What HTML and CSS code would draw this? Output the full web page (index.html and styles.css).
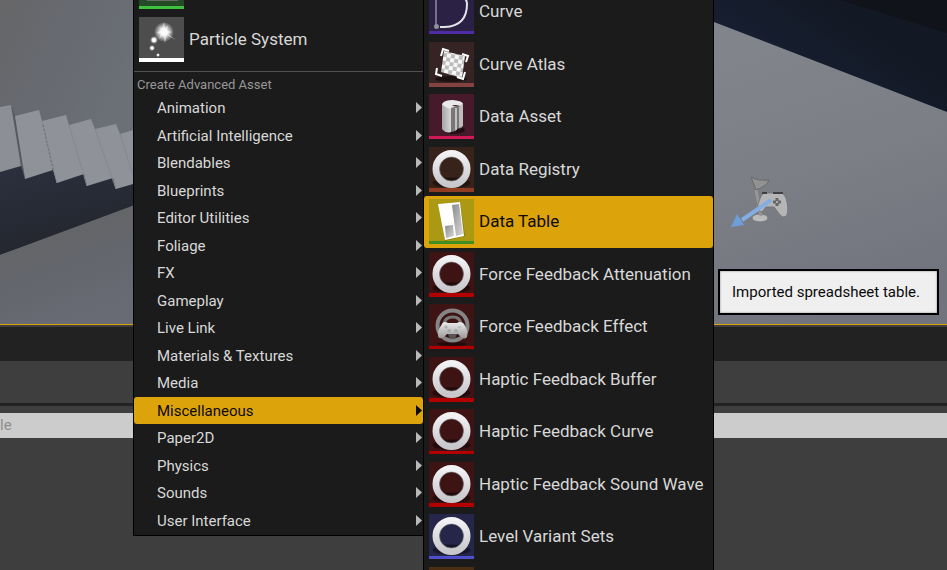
FILE: index.html
```html
<!DOCTYPE html>
<html lang="en">
<head>
<meta charset="utf-8">
<title>Content Browser</title>
<link rel="stylesheet" href="styles.css">
</head>
<body>
<svg class="defs" width="0" height="0" aria-hidden="true">
  <defs>
    <linearGradient id="metal" x1="0" y1="0" x2="0" y2="1">
      <stop offset="0" stop-color="#f2f2f4"/><stop offset="1" stop-color="#c8c8cc"/>
    </linearGradient>
    <linearGradient id="pad" x1="0" y1="0" x2="0" y2="1">
      <stop offset="0" stop-color="#ececec"/><stop offset="1" stop-color="#999"/>
    </linearGradient>
    <linearGradient id="grey" x1="0" y1="0" x2="1" y2="1">
      <stop offset="0" stop-color="#8b8b8b"/><stop offset="1" stop-color="#d8d8d8"/>
    </linearGradient>
    <linearGradient id="pillar" x1="0" y1="0" x2="1" y2="0">
      <stop offset="0" stop-color="#a5a5a5"/><stop offset="0.5" stop-color="#dedede"/><stop offset="1" stop-color="#8d8d8d"/>
    </linearGradient>
    <radialGradient id="glow">
      <stop offset="0" stop-color="#fff"/><stop offset="0.35" stop-color="#fff" stop-opacity="0.9"/><stop offset="1" stop-color="#fff" stop-opacity="0"/>
    </radialGradient>
    <pattern id="checks" width="8" height="8" patternUnits="userSpaceOnUse" patternTransform="rotate(10)">
      <rect width="8" height="8" fill="#f7f7f7"/><path d="M0 0h4v4H0zM4 4h4v4H4z" fill="#bcbcbc"/>
    </pattern>
    <symbol id="ring" viewBox="0 0 45 45">
      <ellipse cx="22.500" cy="36" rx="19" ry="5" fill="#000" opacity="0.4"/>
      <path d="M14 31h17" stroke="#000" opacity="0.35"/>
      <circle cx="22.500" cy="22" r="15.500" fill="none" stroke="url(#metal)" stroke-width="7"/>
      <circle cx="22.500" cy="22" r="12" fill="none" stroke="#77777c" stroke-width="0.600"/>
    </symbol>
  </defs>
</svg>

<main class="editor">
  <svg class="scene" viewBox="0 0 947 324" preserveAspectRatio="none" aria-hidden="true">
    <defs>
      <linearGradient id="wall" x1="0" y1="0" x2="133" y2="60" gradientUnits="userSpaceOnUse">
        <stop offset="0" stop-color="#666668"/><stop offset="0.5" stop-color="#676a70"/><stop offset="1" stop-color="#6b6f76"/>
      </linearGradient>
      <linearGradient id="shade" x1="0" y1="170" x2="20" y2="250" gradientUnits="userSpaceOnUse">
        <stop offset="0" stop-color="#2c303e"/><stop offset="1" stop-color="#24272f"/>
      </linearGradient>
      <linearGradient id="floor" x1="40" y1="225" x2="75" y2="320" gradientUnits="userSpaceOnUse">
        <stop offset="0" stop-color="#656567"/><stop offset="0.5" stop-color="#63666c"/><stop offset="1" stop-color="#686b74"/>
      </linearGradient>
      <linearGradient id="ground" x1="714" y1="60" x2="800" y2="324" gradientUnits="userSpaceOnUse">
        <stop offset="0" stop-color="#81848b"/><stop offset="0.5" stop-color="#7b7e85"/><stop offset="1" stop-color="#71747d"/>
      </linearGradient>
      <linearGradient id="navy" x1="780" y1="60" x2="820" y2="0" gradientUnits="userSpaceOnUse">
        <stop offset="0" stop-color="#161e30"/><stop offset="1" stop-color="#131924"/>
      </linearGradient>
    </defs>
    <rect width="420" height="324" fill="url(#wall)"/>
    <path d="M0 166H140V206L0 255Z" fill="url(#shade)"/>
    <path d="M0 255L140 203V324H0Z" fill="url(#floor)"/>
    <path d="M0 107L11 105L15 122L21 166L0 172Z" fill="#8c8f96"/>
    <path d="M11 105L15 116L25 179L21 166Z" fill="#555960"/>
    <path d="M15 116L39 110L42 121L66 115L69 125L91 119L95 129L116 124L120 134L140 128V182L116 189L113 178L87 186L84 174L57 183L53 170L25 179Z" fill="#8f9299"/>
    <path d="M42 121L57 183M69 125L87 186M95 129L116 189M120 134L133 175" stroke="#858890" fill="none"/>
    <path d="M43 125L53 170" stroke="#6a6d74" stroke-dasharray="2 2" fill="none"/>
    <rect x="420" width="527" height="324" fill="url(#ground)"/>
    <path d="M650 0H947V112L714 22L650 -3Z" fill="url(#navy)"/>
    <path d="M840 0H947V33Z" fill="#10131a"/>
    <g>
      <path d="M751 177L758 214" stroke="#7d7e80" stroke-width="2"/>
      <path d="M751 177Q757 181 769 180Q767 186 756 190Z" fill="#929292" stroke="#66686c"/>
      <ellipse cx="760" cy="218" rx="8" ry="4" fill="#bcbcbc" stroke="#77797c"/>
      <path d="M756 190L761 216" stroke="#969696" stroke-width="3"/>
      <path d="M761 196Q763 192 767 193H776Q783 191 786 198Q789 208 787 215Q784 219 780 215L774 207H766L762 212Q757 211 758 204Z" fill="#b5b5b5" stroke="#74767a"/>
      <path d="M762 193H767M773 193H783" stroke="#3e4044" stroke-width="2"/>
      <path d="M777 198V206M773 202H781" stroke="#666" stroke-width="3"/>
      <circle cx="777" cy="202" r="1" fill="#ccc"/>
      <path d="M771 200L742 220" stroke="#83aee3" stroke-width="4"/>
      <path d="M731 227L737 214L744 225Z" fill="#6e9ed8"/>
    </g>
  </svg>
  <div class="tab-bar"></div>
  <div class="toolbar"></div>
  <div class="search-row">
    <input class="search" type="text" placeholder="le" aria-label="Search">
  </div>
</main>

<nav class="menu menu-assets" aria-label="Create asset">
  <div class="asset-list">
    <button class="asset green" aria-label="Material"><span class="thumb"><svg viewBox="0 0 45 45"><path d="M8 30H39V37H8Z" fill="#666b66"/></svg></span></button>
    <button class="asset particle"><span class="thumb"><svg viewBox="0 0 45 45">
      <circle cx="25" cy="15" r="10" fill="url(#glow)"/>
      <path d="M25 5L26 11L29 9L28 13L33 15L29 17L37 23L28 18L26 26L24 18L20 22L22 17L17 16L22 13L20 10L23 11Z" fill="#fff" opacity="0.5"/>
      <circle cx="15" cy="23" r="4" fill="url(#glow)"/><circle cx="15" cy="23" r="2" fill="#fff"/>
      <circle cx="13" cy="31" r="3" fill="url(#glow)"/><circle cx="13" cy="31" r="1.500" fill="#fff"/>
      <circle cx="19" cy="38" r="2" fill="url(#glow)"/>
    </svg></span>Particle System</button>
  </div>
  <h2 class="section">Create Advanced Asset</h2>
  <div class="category-list">
    <button class="category">Animation</button>
    <button class="category">Artificial Intelligence</button>
    <button class="category">Blendables</button>
    <button class="category">Blueprints</button>
    <button class="category">Editor Utilities</button>
    <button class="category">Foliage</button>
    <button class="category">FX</button>
    <button class="category">Gameplay</button>
    <button class="category">Live Link</button>
    <button class="category">Materials &amp; Textures</button>
    <button class="category">Media</button>
    <button class="category active">Miscellaneous</button>
    <button class="category">Paper2D</button>
    <button class="category">Physics</button>
    <button class="category">Sounds</button>
    <button class="category">User Interface</button>
  </div>
</nav>

<nav class="menu menu-misc" aria-label="Miscellaneous">
  <div class="asset-list">
    <button class="asset violet"><span class="thumb"><svg viewBox="0 0 45 45">
      <path d="M7 8V37" stroke="#77728c" stroke-width="2"/>
      <path d="M10 6Q38 3 38 15Q38 37 16 38H11" fill="none" stroke="#e4e4e8" stroke-width="2"/>
      <circle cx="7.500" cy="37.500" r="2.500" fill="#908f9c"/>
    </svg></span>Curve</button>
    <button class="asset brown"><span class="thumb"><svg viewBox="0 0 45 45">
      <ellipse cx="22" cy="37" rx="16" ry="3" fill="#000" opacity="0.5"/>
      <path d="M15 9L36 14L33 36L12 30Z" fill="url(#checks)"/>
      <path d="M12 14L14 7L20 9M33 12L39 14L37 20M8 26L7 32L13 34M28 35L34 37L36 30" fill="none" stroke="#fff" stroke-width="2"/>
    </svg></span>Curve Atlas</button>
    <button class="asset magenta"><span class="thumb"><svg viewBox="0 0 45 45">
      <ellipse cx="25" cy="36" rx="11" ry="4" fill="#000" opacity="0.5"/>
      <path d="M13 10V35Q17 40 22 38V16L34 10V32L30 34V13Z" fill="url(#pillar)"/>
      <path d="M22 14L33 11V34L27 35V37L22 38Z" fill="#777"/>
      <path d="M27 14V36" stroke="#c0c0c0" stroke-width="2"/>
      <path d="M30 13L34 10V32L30 34Z" fill="#bdbdbd"/>
      <path d="M13 10Q15 6 24 6Q34 7 34 10L31 12Q22 9 22 15Q15 13 13 10Z" fill="#e9e9e9"/>
    </svg></span>Data Asset</button>
    <button class="asset rust"><span class="thumb"><svg viewBox="0 0 45 45"><use href="#ring"/></svg></span>Data Registry</button>
    <button class="asset olive active"><span class="thumb"><svg viewBox="0 0 45 45">
      <path d="M10 5L31 3L36 37L16 42Z" fill="#6b6500" opacity="0.6"/>
      <path d="M9 5L31 3L35 37L16 41Z" fill="#fff"/>
      <path d="M23 6L30 5L34 35L27 37Z" fill="url(#grey)"/>
      <path d="M16 27L24 26L25 37L17 39Z" fill="url(#grey)"/>
    </svg></span>Data Table</button>
    <button class="asset red"><span class="thumb"><svg viewBox="0 0 45 45"><use href="#ring"/></svg></span>Force Feedback Attenuation</button>
    <button class="asset red"><span class="thumb"><svg viewBox="0 0 45 45">
      <ellipse cx="23" cy="40" rx="15" ry="2" fill="#000" opacity="0.4"/>
      <circle cx="23.500" cy="21.500" r="15" fill="none" stroke="#858585" stroke-width="4"/>
      <path d="M15 20Q16 13 24 13Q31 13 32 20" fill="none" stroke="#777" stroke-width="3"/>
      <path d="M19 30H28L26 35H21Z" fill="#555"/>
      <path d="M13 20Q13 18 17 18L19 19H28L30 18Q34 18 35 20Q40 28 38 33Q36 36 32 33L29 30H18L15 33Q10 36 9 32Q8 27 13 20Z" fill="url(#pad)"/>
      <path d="M17 21V25M15 23H19M29 23H32" stroke="#aaa"/>
      <circle cx="20" cy="27" r="2" fill="#aaa"/><circle cx="27" cy="27" r="2" fill="#aaa"/>
    </svg></span>Force Feedback Effect</button>
    <button class="asset red"><span class="thumb"><svg viewBox="0 0 45 45"><use href="#ring"/></svg></span>Haptic Feedback Buffer</button>
    <button class="asset red"><span class="thumb"><svg viewBox="0 0 45 45"><use href="#ring"/></svg></span>Haptic Feedback Curve</button>
    <button class="asset red"><span class="thumb"><svg viewBox="0 0 45 45"><use href="#ring"/></svg></span>Haptic Feedback Sound Wave</button>
    <button class="asset blue"><span class="thumb"><svg viewBox="0 0 45 45"><use href="#ring"/></svg></span>Level Variant Sets</button>
    <button class="asset orange" aria-label="Media"><span class="thumb"></span></button>
  </div>
</nav>

<div class="tooltip" role="tooltip">Imported spreadsheet table.</div>
</body>
</html>
```
FILE: styles.css
```css
* {
  box-sizing: border-box;
}

body {
  margin: 0;
  height: 100vh;
  overflow: hidden;
  position: relative;
  background: #3e3e3e;
  color: #d8d8d8;
  font-family: Roboto, "Liberation Sans", sans-serif;
  font-size: 15px;
}

.defs {
  position: absolute;
}

.editor {
  display: flex;
  flex-direction: column;
}

.scene {
  display: block;
  width: 100%;
  height: 324px;
}

.tab-bar {
  height: 37px;
  background: #222;
  border-top: 1px solid #dca30b;
  box-shadow: inset 0 2px #3e3e3e;
}

.toolbar {
  height: 45px;
  border-bottom: 3px solid #222;
}

.search-row {
  padding-top: 7px;
}

.search {
  display: block;
  width: 100%;
  height: 25px;
  padding: 0 0 2px;
  border: 0;
  border-radius: 0;
  background: #ccc;
  color: #333;
  font: inherit;
}

.search::placeholder {
  color: #8e8e8e;
  opacity: 1;
}

.menu {
  position: absolute;
  width: 291px;
  border: 1px solid #000;
  background: #1b1b1b;
}

.menu-assets {
  top: -40px;
  left: 133px;
  padding-bottom: 1px;
}

.menu-misc {
  top: -15px;
  bottom: 0;
  left: 423px;
  border-bottom: 0;
  overflow: hidden;
}

.asset-list {
  display: grid;
  grid-auto-rows: 53px 52px;
}

.asset,
.category {
  display: flex;
  align-items: center;
  width: 100%;
  border: 0;
  border-radius: 3px;
  background: none;
  color: inherit;
  font: inherit;
  text-align: left;
  white-space: nowrap;
}

.asset {
  height: 52px;
  gap: 5px;
  padding: 0 5px 2px;
  font-size: 17px;
}

.category {
  height: 27px;
  padding: 0 1px 0 23px;
  justify-content: space-between;
}

.asset.active,
.category.active {
  background: #dca30b;
  color: #0c0a04;
}

.thumb {
  flex: none;
  width: 45px;
  height: 45px;
  background: var(--fill);
  border-bottom: 3px solid var(--bar);
}

.asset:nth-child(even) .thumb {
  border-bottom-width: 4px;
}

.thumb svg {
  display: block;
  width: 45px;
  height: 45px;
}

.green { --fill: #244a26; --bar: #3fc13f; }
.particle { --fill: #4d4d4d; --bar: #fff; }
.violet { --fill: #2a2145; --bar: #4f2ba8; }
.brown { --fill: #352423; --bar: #844240; }
.magenta { --fill: #461a2b; --bar: #cf1a55; }
.rust { --fill: #38231b; --bar: #8f3c22; }
.olive { --fill: #ab9913; --bar: #3f8f24; }
.red { --fill: #3d1313; --bar: #b20000; }
.blue { --fill: #25264a; --bar: #4f4fcb; }
.orange { --fill: #4b2d12; --bar: #a86218; }

.section {
  margin: 5px 0 0;
  padding: 3px 3px 0;
  height: 23px;
  border-top: 1px solid #505050;
  color: #979797;
  font-size: 13px;
  font-weight: 400;
  line-height: 20px;
}

.category-list {
  display: grid;
  grid-auto-rows: 28px 27px;
}

.category::after {
  content: "";
  width: 6px;
  height: 11px;
  background: #b9b9b9;
  clip-path: polygon(0 0, 100% 50%, 0 100%);
}

.category.active::after {
  background: #0c0a04;
}

.tooltip {
  position: absolute;
  top: 269px;
  left: 718px;
  min-width: 221px;
  padding: 12px;
  border: 2px solid #000;
  background: #efefef;
  box-shadow: inset 0 0 2px #777;
  color: #0a0a0a;
  line-height: 18px;
}
```
